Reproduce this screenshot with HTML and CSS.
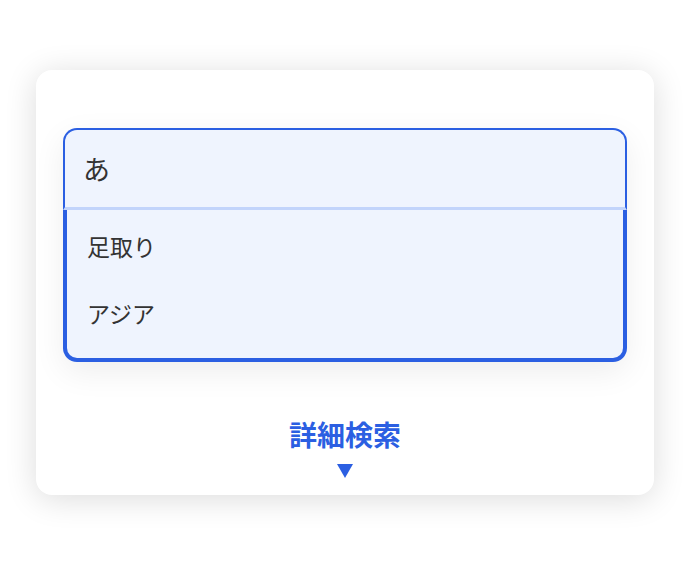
FILE: index.html
```html
<!DOCTYPE html>
<html lang="ja">
  <head>
    <meta charset="UTF-8" />
    <meta name="viewport" content="width=device-width, initial-scale=1.0" />
    <title>検索</title>
    <link rel="stylesheet" href="styles.css">
  </head>
  <body>
    <div class="card">
      <div class="search-box">
        <div class="search-field">あ</div>
        <ul class="suggestions">
          <li>足取り</li>
          <li>アジア</li>
        </ul>
      </div>

      <div class="advanced">
        <span class="advanced-label">詳細検索</span>
        <span class="advanced-arrow"></span>
      </div>
    </div>
  </body>
</html>
```

FILE: styles.css
```css
html,
body {
  min-height: 566px;
}
body {
  margin: 0;
  padding: 70px 0 0 36px;
  box-sizing: border-box;
  background: #ffffff;
  font-family: "Noto Sans CJK JP", "Noto Sans", sans-serif;
  color: #333333;
}
.card {
  box-sizing: border-box;
  width: 618px;
  height: 425px;
  padding: 58px 27px 0;
  background: #ffffff;
  border-radius: 16px;
  box-shadow: 0 4px 32px rgba(0, 0, 0, 0.14);
}
.search-box {
  width: 564px;
  border-radius: 14px;
  box-shadow: 0 10px 32px rgba(0, 0, 0, 0.07);
}
.search-field {
  box-sizing: border-box;
  height: 82px;
  padding: 0 18px;
  display: flex;
  align-items: center;
  font-size: 27px;
  background: #eff4fe;
  border: 2px solid #2b5fe2;
  border-bottom: 3px solid #c2d4fb;
  border-radius: 14px 14px 0 0;
}
.suggestions {
  list-style: none;
  margin: 0;
  padding: 2px 0 12px;
  background: #eff4fe;
  border: 4px solid #2b5fe2;
  border-top: none;
  border-radius: 0 0 14px 14px;
}
.suggestions li {
  height: 67px;
  padding-left: 20px;
  display: flex;
  align-items: center;
  font-size: 23px;
}
.advanced {
  margin-top: 54px;
  display: flex;
  flex-direction: column;
  align-items: center;
  gap: 12px;
}
.advanced-label {
  font-size: 28px;
  font-weight: bold;
  color: #2b5fe2;
  line-height: 36px;
}
.advanced-arrow {
  width: 0;
  height: 0;
  border-left: 8px solid transparent;
  border-right: 8px solid transparent;
  border-top: 14px solid #2b5fe2;
}
```
